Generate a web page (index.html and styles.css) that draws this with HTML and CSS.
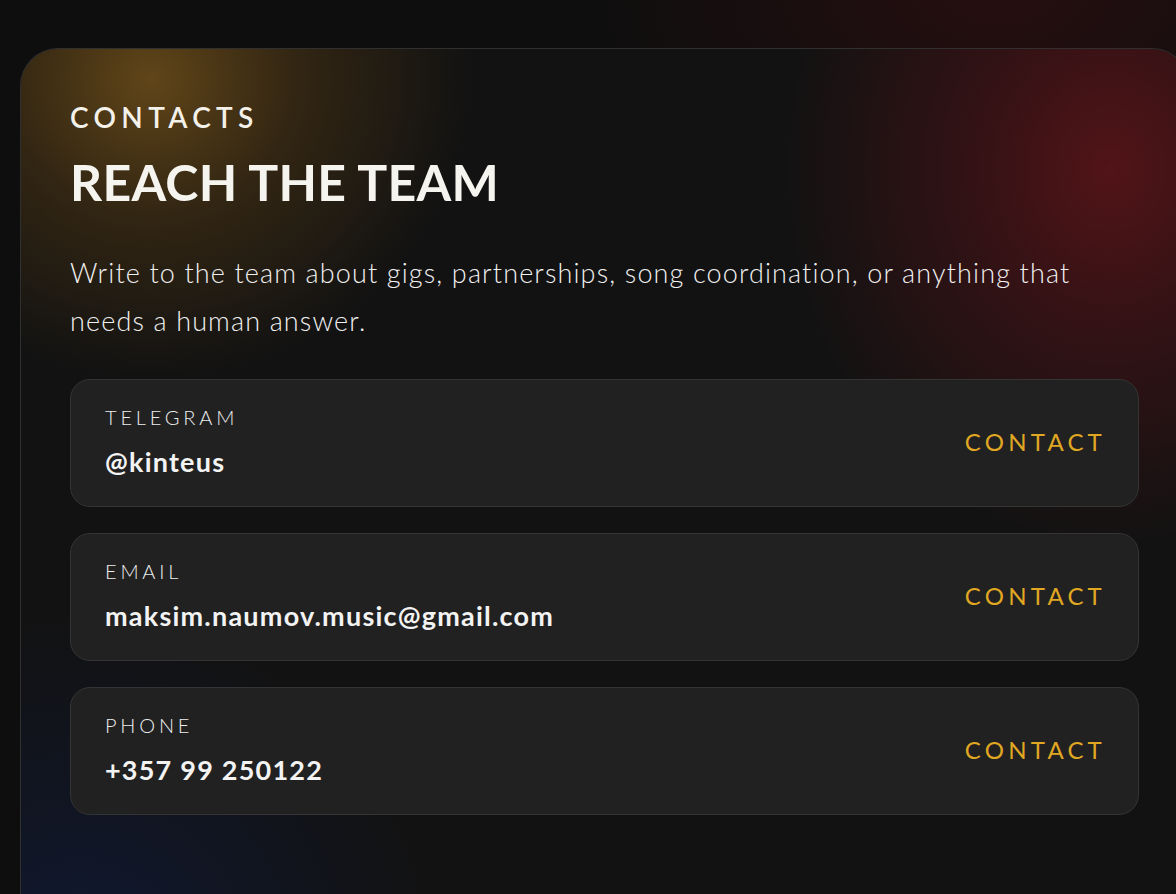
FILE: index.html
```html
<!DOCTYPE html>
<html lang="en">
<head>
<meta charset="utf-8">
<title>Contacts</title>
<link rel="stylesheet" href="styles.css">
</head>
<body>
<section class="panel">
  <div class="glow glow-gold"></div>
  <div class="glow glow-red"></div>
  <div class="glow glow-blue"></div>
  <div class="content">
    <p class="eyebrow">CONTACTS</p>
    <h1 class="title">REACH THE TEAM</h1>
    <p class="lead">Write to the team about gigs, partnerships, song coordination, or anything that needs a human answer.</p>
    <div class="list">
      <a class="item" href="#">
        <div class="info">
          <span class="label">TELEGRAM</span>
          <span class="value">@kinteus</span>
        </div>
        <span class="action">CONTACT</span>
      </a>
      <a class="item" href="#">
        <div class="info">
          <span class="label">EMAIL</span>
          <span class="value">maksim.naumov.music@gmail.com</span>
        </div>
        <span class="action">CONTACT</span>
      </a>
      <a class="item" href="#">
        <div class="info">
          <span class="label">PHONE</span>
          <span class="value">+357 99 250122</span>
        </div>
        <span class="action">CONTACT</span>
      </a>
    </div>
  </div>
</section>
</body>
</html>
```

FILE: styles.css
```css
* { box-sizing: border-box; }

html, body {
  margin: 0;
  padding: 0;
  height: 100%;
}

body {
  overflow: hidden;
  background:
    radial-gradient(ellipse 600px 300px at 1000px 0px, rgba(40, 14, 16, 0.9), rgba(40, 14, 16, 0) 70%),
    #0e0e0e;
  font-family: "Lato", "Open Sans", sans-serif;
  color: #f2f2f2;
  padding: 48px 0 0 20px;
}

.panel {
  position: relative;
  width: 1170px;
  min-height: 900px;
  border: 1px solid rgba(255, 255, 255, 0.13);
  border-radius: 38px;
  background: #121212;
  overflow: hidden;
}

.glow {
  position: absolute;
  pointer-events: none;
  border-radius: 50%;
}

.glow-gold {
  left: -190px;
  top: -270px;
  width: 640px;
  height: 600px;
  background: radial-gradient(closest-side, rgba(110, 78, 25, 0.85), rgba(90, 62, 20, 0.45) 45%, rgba(60, 40, 15, 0) 100%);
}

.glow-red {
  left: 760px;
  top: -260px;
  width: 660px;
  height: 760px;
  background: radial-gradient(closest-side, rgba(85, 20, 24, 0.95), rgba(70, 18, 22, 0.6) 45%, rgba(50, 14, 16, 0) 100%);
}

.glow-blue {
  left: -300px;
  top: 560px;
  width: 720px;
  height: 720px;
  background: radial-gradient(closest-side, rgba(16, 26, 54, 0.9), rgba(16, 24, 48, 0.5) 50%, rgba(16, 24, 48, 0) 100%);
}

.content {
  position: relative;
  padding: 51px 50px 60px 49px;
}

.eyebrow {
  margin: 0;
  font-size: 28px;
  line-height: 34px;
  font-weight: 600;
  letter-spacing: 0.19em;
  color: #f4f1ea;
}

.title {
  margin: 18px 0 0;
  font-size: 50px;
  line-height: 60px;
  font-weight: 700;
  letter-spacing: 0.005em;
  color: #f6f4ef;
}

.lead {
  margin: 37px 0 0;
  font-size: 27px;
  line-height: 48px;
  font-weight: 300;
  letter-spacing: 0.042em;
  color: #f0f0f0;
  max-width: 1040px;
}

.list {
  margin-top: 34px;
  display: flex;
  flex-direction: column;
  gap: 26px;
}

.item {
  display: flex;
  align-items: center;
  justify-content: space-between;
  height: 128px;
  padding: 25px 32px 28px 34px;
  border: 1px solid #343434;
  border-radius: 20px;
  background: #212121;
  text-decoration: none;
  color: inherit;
}

.info {
  display: flex;
  flex-direction: column;
  gap: 17px;
}

.label {
  font-size: 20px;
  line-height: 24px;
  font-weight: 300;
  letter-spacing: 0.19em;
  color: #eeeeee;
}

.value {
  font-size: 27px;
  line-height: 32px;
  font-weight: 700;
  letter-spacing: 0.045em;
  color: #f3f3f3;
}

.action {
  font-size: 24px;
  line-height: 30px;
  font-weight: 400;
  letter-spacing: 0.175em;
  color: #e0a722;
}
```
